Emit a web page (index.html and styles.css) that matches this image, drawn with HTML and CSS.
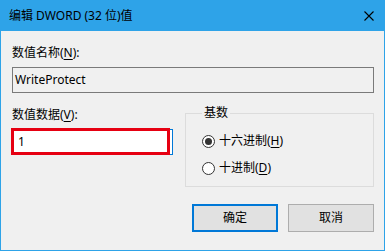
FILE: index.html
```html
<!DOCTYPE html>
<html>
<head>
    <title>编辑 DWORD (32 位)值</title>
    <link rel="stylesheet" href="styles.css">
</head>
<body>
    <div class="window">
        <div class="titlebar">
            <span class="title">编辑 DWORD (32 位)值</span>
            <svg class="close" width="10" height="10" viewBox="0 0 10 10">
                <path d="M0.5 0.5 L9.5 9.5 M9.5 0.5 L0.5 9.5" stroke="#000" stroke-width="1.1" fill="none"/>
            </svg>
        </div>

        <div class="client">
            <div class="label">数值名称(<u>N</u>):</div>
            <div class="textbox name">WriteProtect</div>

            <div class="row">
                <div class="data">
                    <div class="label">数值数据(<u>V</u>):</div>
                    <div class="textbox value">1</div>
                    <div class="mark"></div>
                </div>

                <fieldset class="base">
                    <legend>基数</legend>
                    <div class="radio">
                        <span class="dot checked"></span>
                        <span>十六进制(<u>H</u>)</span>
                    </div>
                    <div class="radio">
                        <span class="dot"></span>
                        <span>十进制(<u>D</u>)</span>
                    </div>
                </fieldset>
            </div>

            <div class="buttons">
                <div class="btn default">确定</div>
                <div class="btn">取消</div>
            </div>
        </div>
    </div>
</body>
</html>
```

FILE: styles.css
```css
body {
    margin: 0;
    padding: 0;
    font-family: "Noto Sans", "Noto Sans CJK SC", sans-serif;
    font-size: 12px;
    line-height: 16px;
    color: #000000;
    background: #f0f0f0;
}

.window {
    width: 385px;
    height: 251px;
    display: flex;
    flex-direction: column;
}

.titlebar {
    height: 31px;
    background-color: #2ea3e8;
    display: flex;
    align-items: center;
    justify-content: space-between;
    padding: 0 11px 0 9px;
    box-sizing: border-box;
}

.close {
    margin-top: 1px;
}

.client {
    flex: 1;
    border: 1px solid #2ea3e8;
    border-top: none;
    padding: 14px 10px 0 11px;
    background-color: #f0f0f0;
}

.label u, .radio u {
    text-decoration-thickness: 1px;
    text-underline-offset: 2px;
}

.textbox {
    height: 26px;
    box-sizing: border-box;
    border: 1px solid #7a7a7a;
    background-color: #ffffff;
    padding: 0 2px;
    display: flex;
    align-items: center;
}

.name {
    margin-top: 6px;
    background-color: #f0f0f0;
}

.row {
    display: flex;
    justify-content: space-between;
    margin-top: 12px;
}

.data {
    width: 161px;
    padding-top: 2px;
    position: relative;
}

.value {
    margin-top: 6px;
    border-color: #0078d7;
    padding-left: 5px;
}

/* red highlight drawn over the value box */
.mark {
    position: absolute;
    left: -1px;
    top: 23px;
    width: 159px;
    height: 27px;
    box-sizing: border-box;
    border: 3px solid #e60012;
}

.base {
    width: 189px;
    height: 82px;
    box-sizing: border-box;
    margin: 0;
    border: 1px solid #dcdcdc;
    padding: 12px 6px 0 16px;
}

.base legend {
    padding: 0 2px;
    line-height: 16px;
}

.radio {
    display: flex;
    align-items: center;
    gap: 4px;
    height: 16px;
    margin-bottom: 11px;
}

.dot {
    width: 13px;
    height: 13px;
    box-sizing: border-box;
    border: 1px solid #333333;
    border-radius: 50%;
    background-color: #ffffff;
    display: flex;
    align-items: center;
    justify-content: center;
}

.dot.checked::after {
    content: "";
    width: 7px;
    height: 7px;
    border-radius: 50%;
    background-color: #333333;
}

.buttons {
    display: flex;
    justify-content: flex-end;
    gap: 10px;
    margin-top: 17px;
}

.btn {
    width: 86px;
    height: 28px;
    box-sizing: border-box;
    border: 1px solid #adadad;
    background-color: #e1e1e1;
    display: flex;
    align-items: center;
    justify-content: center;
}

.btn.default {
    border: 2px solid #0078d7;
}
```
